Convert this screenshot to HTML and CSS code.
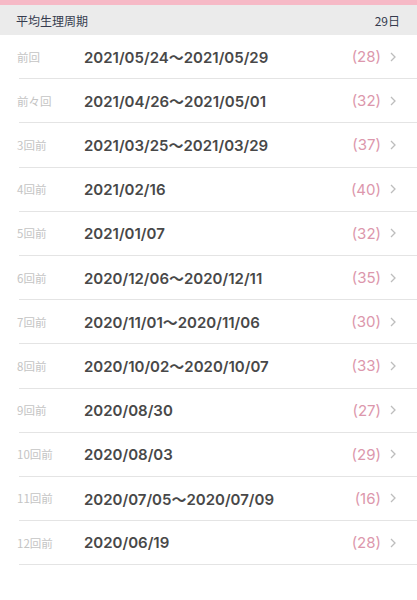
FILE: index.html
```html
<!DOCTYPE html>
<html lang="ja">
<head>
    <meta charset="UTF-8">
    <title>生理履歴</title>
    <link rel="stylesheet" href="styles.css">
</head>
<body>
    <div class="top-bar"></div>
    <div class="summary">
        <span>平均生理周期</span>
        <span>29日</span>
    </div>
    <ul class="history">
        <li class="row"><span class="label">前回</span><span class="date">2021/05/24〜2021/05/29</span><span class="days">(28)</span><svg class="chev" viewBox="0 0 6 10"><polyline points="1,1 5,5 1,9"/></svg></li>
        <li class="row"><span class="label">前々回</span><span class="date">2021/04/26〜2021/05/01</span><span class="days">(32)</span><svg class="chev" viewBox="0 0 6 10"><polyline points="1,1 5,5 1,9"/></svg></li>
        <li class="row"><span class="label">3回前</span><span class="date">2021/03/25〜2021/03/29</span><span class="days">(37)</span><svg class="chev" viewBox="0 0 6 10"><polyline points="1,1 5,5 1,9"/></svg></li>
        <li class="row"><span class="label">4回前</span><span class="date">2021/02/16</span><span class="days">(40)</span><svg class="chev" viewBox="0 0 6 10"><polyline points="1,1 5,5 1,9"/></svg></li>
        <li class="row"><span class="label">5回前</span><span class="date">2021/01/07</span><span class="days">(32)</span><svg class="chev" viewBox="0 0 6 10"><polyline points="1,1 5,5 1,9"/></svg></li>
        <li class="row"><span class="label">6回前</span><span class="date">2020/12/06〜2020/12/11</span><span class="days">(35)</span><svg class="chev" viewBox="0 0 6 10"><polyline points="1,1 5,5 1,9"/></svg></li>
        <li class="row"><span class="label">7回前</span><span class="date">2020/11/01〜2020/11/06</span><span class="days">(30)</span><svg class="chev" viewBox="0 0 6 10"><polyline points="1,1 5,5 1,9"/></svg></li>
        <li class="row"><span class="label">8回前</span><span class="date">2020/10/02〜2020/10/07</span><span class="days">(33)</span><svg class="chev" viewBox="0 0 6 10"><polyline points="1,1 5,5 1,9"/></svg></li>
        <li class="row"><span class="label">9回前</span><span class="date">2020/08/30</span><span class="days">(27)</span><svg class="chev" viewBox="0 0 6 10"><polyline points="1,1 5,5 1,9"/></svg></li>
        <li class="row"><span class="label">10回前</span><span class="date">2020/08/03</span><span class="days">(29)</span><svg class="chev" viewBox="0 0 6 10"><polyline points="1,1 5,5 1,9"/></svg></li>
        <li class="row"><span class="label">11回前</span><span class="date">2020/07/05〜2020/07/09</span><span class="days">(16)</span><svg class="chev" viewBox="0 0 6 10"><polyline points="1,1 5,5 1,9"/></svg></li>
        <li class="row"><span class="label">12回前</span><span class="date">2020/06/19</span><span class="days">(28)</span><svg class="chev" viewBox="0 0 6 10"><polyline points="1,1 5,5 1,9"/></svg></li>
    </ul>
</body>
</html>
```
FILE: styles.css
```css
body {
    margin: 0;
    background: #fff;
    font-family: "Noto Sans CJK JP", "Noto Sans", sans-serif;
}
.top-bar {
    height: 5px;
    background: #f6b9c6;
}
.summary {
    display: flex;
    justify-content: space-between;
    align-items: center;
    height: 30px;
    padding: 0 17px 0 16px;
    background: #ebebeb;
    color: #363b4e;
    font-size: 12px;
}
.history {
    list-style: none;
    margin: 0 0 0 19px;
    padding: 0;
}
.row {
    display: flex;
    align-items: center;
    height: 44.2px;
    box-sizing: border-box;
    border-bottom: 1.5px solid #e4e4e4;
    padding-right: 21px;
}
.label {
    width: 67px;
    margin-left: -2px;
    color: #c4c4c4;
    font-size: 11.5px;
}
.date {
    flex: 1;
    color: #484848;
    font-size: 15px;
    font-weight: 600;
    font-family: Inter, "Noto Sans CJK JP", sans-serif;
}
.days {
    color: #dc97ac;
    font-size: 15px;
    font-family: Inter, sans-serif;
}
.chev {
    width: 6px;
    height: 10px;
    margin-left: 9px;
    fill: none;
    stroke: #bdbdbd;
    stroke-width: 1.3;
}
```
